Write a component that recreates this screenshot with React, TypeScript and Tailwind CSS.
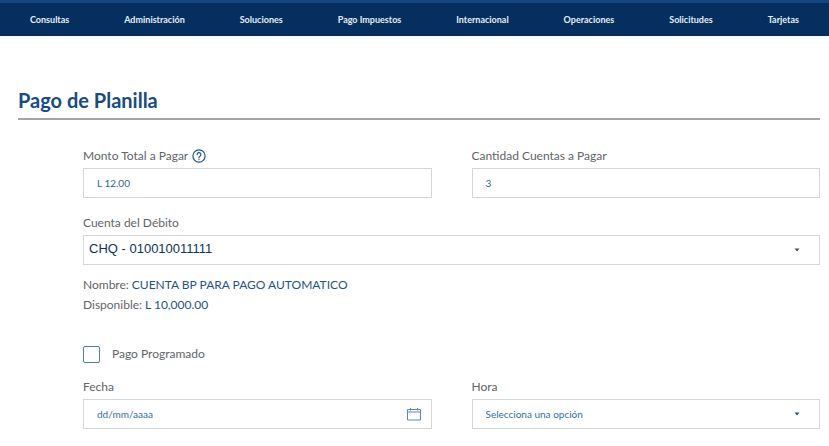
import { useState, type ReactNode } from "react";

const NAV_ITEMS = [
  "Consultas",
  "Administración",
  "Soluciones",
  "Pago Impuestos",
  "Internacional",
  "Operaciones",
  "Solicitudes",
  "Tarjetas",
];

const BOX = "h-[30px] w-full rounded-none border border-[#d4d6d8] bg-white outline-none focus:border-[#1d5a94]";

function Caret({ className }: { className: string }) {
  return (
    <svg viewBox="0 0 6 4" aria-hidden="true" className={`pointer-events-none absolute top-1/2 right-5 h-1 w-1.5 -translate-y-1/2 ${className}`}>
      <path d="M0.5 0.5h5L3 3.5z" fill="currentColor" />
    </svg>
  );
}

function Field({ id, label, extra, children }: { id: string; label: string; extra?: ReactNode; children: ReactNode }) {
  return (
    <div className="flex min-w-0 flex-col gap-0.5">
      <div className="flex h-5 items-center gap-1">
        <label htmlFor={id}>{label}</label>
        {extra}
      </div>
      <div className="relative">{children}</div>
    </div>
  );
}

export default function App() {
  const [scheduled, setScheduled] = useState(false);
  const [date, setDate] = useState("");

  return (
    <div className="bg-white font-['Lato',sans-serif] text-[12px] leading-5 text-[#626466]">
      <nav className="border-t-[3px] border-[#114681] bg-[#062e5f]">
        <ul className="flex h-[33px] items-center justify-between px-[30px]">
          {NAV_ITEMS.map((item) => (
            <li key={item}>
              <a href="#" className="block text-[9px] font-bold whitespace-nowrap text-[#e4eef8]">
                {item}
              </a>
            </li>
          ))}
        </ul>
      </nav>

      <main className="pt-[50px] pr-[9px] pb-4 pl-[18px]">
        <h1 className="border-b-2 border-[#a3a5a6] pb-1 text-[20px] leading-7 font-bold text-[#164c86]">
          Pago de Planilla
        </h1>

        <form className="pt-[26px] pl-[65px]" onSubmit={(e) => e.preventDefault()}>
          <div className="grid grid-cols-2 gap-x-10">
            <Field
              id="monto"
              label="Monto Total a Pagar"
              extra={
                <button type="button" aria-label="Ayuda" className="text-[#1d5488]">
                  <svg viewBox="0 0 14 14" className="size-3.5" fill="none" stroke="currentColor" strokeWidth="1.2" strokeLinecap="round">
                    <circle cx="7" cy="7" r="6.1" />
                    <path d="M5.1 5.5a1.9 1.9 0 1 1 2.8 1.7c-.6.3-.9.6-.9 1.2" />
                    <path d="M7 10.2v.1" strokeWidth="1.4" />
                  </svg>
                </button>
              }
            >
              <input id="monto" type="text" readOnly value="L 12.00" className={`${BOX} px-[13px] text-[10px] text-[#2f6795]`} />
            </Field>
            <Field id="cantidad" label="Cantidad Cuentas a Pagar">
              <input id="cantidad" type="text" readOnly value="3" className={`${BOX} px-[13px] text-[10px] text-[#2f6795]`} />
            </Field>
          </div>

          <div className="pt-[15px]">
            <Field id="cuenta" label="Cuenta del Débito">
              <select
                id="cuenta"
                className={`${BOX} appearance-none pr-8 pb-0.5 pl-[5px] font-['Liberation_Sans',Arial,sans-serif] text-[13px] text-[#0e3358]`}
              >
                <option>CHQ - 010010011111</option>
              </select>
              <Caret className="text-[#4b5157]" />
            </Field>
          </div>

          <dl className="pt-2.5">
            <div className="flex gap-[3px]">
              <dt>Nombre:</dt>
              <dd className="text-[#1d5488]">CUENTA BP PARA PAGO AUTOMATICO</dd>
            </div>
            <div className="flex gap-[3px]">
              <dt>Disponible:</dt>
              <dd className="text-[#1d5488]">L 10,000.00</dd>
            </div>
          </dl>

          <div className="flex h-5 items-center gap-3 mt-[29px]">
            <input
              id="programado"
              type="checkbox"
              checked={scheduled}
              onChange={(e) => setScheduled(e.target.checked)}
              className="size-[17px] appearance-none rounded-xs border border-[#4f7fa6] bg-white checked:bg-[#1d5488]"
            />
            <label htmlFor="programado">Pago Programado</label>
          </div>

          <div className="grid grid-cols-2 gap-x-10 pt-[13px]">
            <Field id="fecha" label="Fecha">
              <input
                id="fecha"
                type="text"
                placeholder="dd/mm/aaaa"
                value={date}
                onChange={(e) => setDate(e.target.value)}
                className={`${BOX} pr-8 pl-[13px] text-[10px] text-[#2f6fa3] placeholder:text-[#2f6fa3]`}
              />
              <button type="button" aria-label="Abrir calendario" className="absolute top-1/2 right-[11px] -translate-y-1/2 text-[#5d89a5]">
                <svg viewBox="0 0 14 14" className="block size-3.5" fill="none" stroke="currentColor" strokeWidth="1">
                  <path d="M0.5 2.5h13v10.5h-13z" />
                  <path d="M0.5 5h13M3.5 1v2.5M10.5 1v2.5" />
                </svg>
              </button>
            </Field>
            <Field id="hora" label="Hora">
              <select id="hora" defaultValue="" className={`${BOX} appearance-none pr-8 pl-[13px] text-[10px] text-[#2f6fa3]`}>
                <option value="">Selecciona una opción</option>
                <option value="08:00">08:00</option>
                <option value="12:00">12:00</option>
                <option value="16:00">16:00</option>
              </select>
              <Caret className="text-[#1d5a94]" />
            </Field>
          </div>
        </form>
      </main>
    </div>
  );
}
